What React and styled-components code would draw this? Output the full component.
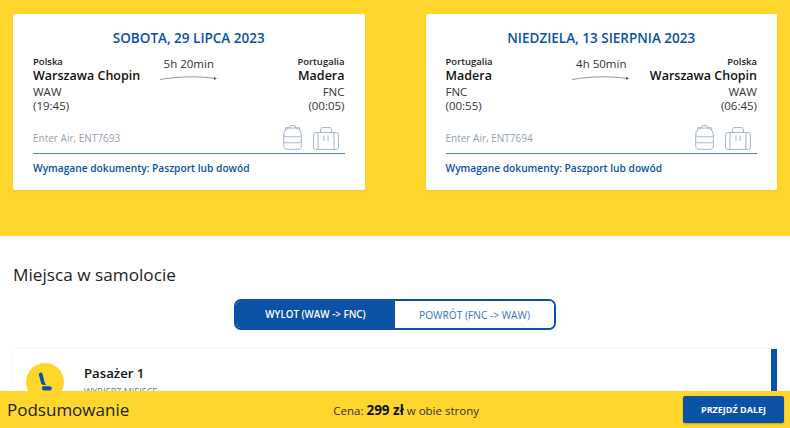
import styled, { createGlobalStyle } from 'styled-components';

const GlobalStyle = createGlobalStyle`
    html, body {
        margin: 0;
        padding: 0;
        background: #fff;
        overflow: hidden;
    }
    * {
        box-sizing: border-box;
    }
    body {
        font-family: "Open Sans", "Noto Sans", sans-serif;
        color: #1a1a1a;
    }
`;

const flights = [
    {
        date: 'SOBOTA, 29 LIPCA 2023',
        duration: '5h 20min',
        carrier: 'Enter Air, ENT7693',
        from: { country: 'Polska', city: 'Warszawa Chopin', code: 'WAW', time: '(19:45)' },
        to: { country: 'Portugalia', city: 'Madera', code: 'FNC', time: '(00:05)' },
    },
    {
        date: 'NIEDZIELA, 13 SIERPNIA 2023',
        duration: '4h 50min',
        carrier: 'Enter Air, ENT7694',
        from: { country: 'Portugalia', city: 'Madera', code: 'FNC', time: '(00:55)' },
        to: { country: 'Polska', city: 'Warszawa Chopin', code: 'WAW', time: '(06:45)' },
    },
];

function Arc() {
    return (
        <svg width="58" height="6" viewBox="0 0 58 6" fill="none">
            <path d="M0 4.500C18 1.500 38 .8 56 3.600" stroke="#7a7f85" strokeWidth=".8" />
            <path d="M54 1.800l3 1.900-3 1z" fill="#55595e" />
        </svg>
    );
}

function Backpack() {
    return (
        <svg width="19" height="25" viewBox="0 0 19 25" fill="none" stroke="#a3b4c6" strokeWidth="1">
            <path d="M6.500 3V1.800C6.500 1 7 .6 7.800.6h3.400c.8 0 1.300.4 1.300 1.200V3" />
            <path d="M.7 9.500c0-3.600 2.400-5.800 5.300-6.500h7c2.900.7 5.300 2.900 5.300 6.500v11.500c0 2-1.500 3.300-3.400 3.300H4.100C2.200 24.300.7 23 .7 21z" />
            <path d="M.7 10.500c.8 1 1.800 1.300 3 1.300h11.600c1.200 0 2.200-.3 3-1.300" />
            <path d="M.7 16.500c.8 1 1.800 1.300 3 1.300h11.600c1.200 0 2.200-.3 3-1.300" />
            <path d="M2.500 5V3.300c0-.6.500-1 1.200-.8L6 3M16.500 5V3.300c0-.6-.5-1-1.200-.8L13 3" />
        </svg>
    );
}

function Suitcase() {
    return (
        <svg width="26" height="23" viewBox="0 0 26 23" fill="none" stroke="#a3b4c6" strokeWidth="1">
            <rect x=".6" y="5.500" width="24.800" height="16.900" rx="2" />
            <path d="M7.500 5.500V2.300C7.500 1.300 8.300.6 9.300.6h7.400c1 0 1.800.7 1.800 1.700v3.200" />
            <path d="M5 5.500v16.900M21 5.500v16.900M11 8.500v5.500M15 8.500v5.500" />
        </svg>
    );
}

function Seat() {
    return (
        <svg width="14" height="20" viewBox="0 0 14 20" fill="#0a52a6">
            <path d="M.8 2.300C1 .5 3.700-.4 4.300 1.300l2.500 9.500c.3 1 1 1.500 2 1.700l-3 .5c-1.300 0-2.300-.7-2.800-2z" />
            <path d="M4.500 14.200h6.700c1.600 0 2.600.8 2.600 2 0 1.400-1 2.300-2.400 2.300H6.500c-1.300 0-2.300-.8-2.600-2.100z" />
        </svg>
    );
}

function Endpoint({ place, right }) {
    return (
        <Place $right={right}>
            <Country>{place.country}</Country>
            <City>{place.city}</City>
            <Code>{place.code}</Code>
            <Code>{place.time}</Code>
        </Place>
    );
}

function FlightCard({ flight }) {
    return (
        <Card>
            <CardDate>{flight.date}</CardDate>
            <Route>
                <Endpoint place={flight.from} />
                <Duration>
                    <span>{flight.duration}</span>
                    <Arc />
                </Duration>
                <Endpoint place={flight.to} right />
            </Route>
            <CarrierRow>
                <Carrier>{flight.carrier}</Carrier>
                <Baggage>
                    <Backpack />
                    <Suitcase />
                </Baggage>
            </CarrierRow>
            <Documents>Wymagane dokumenty: Paszport lub dowód</Documents>
        </Card>
    );
}

export default function App() {
    return (
        <Page>
            <GlobalStyle />
            <FlightBand>
                {flights.map((flight) => <FlightCard flight={flight} key={flight.carrier} />)}
            </FlightBand>
            <SeatSection>
                <SectionTitle>Miejsca w samolocie</SectionTitle>
                <Toggle>
                    <ToggleOption $active>WYLOT (WAW -&gt; FNC)</ToggleOption>
                    <ToggleOption>POWRÓT (FNC -&gt; WAW)</ToggleOption>
                </Toggle>
                <PassengerCard>
                    <SeatBadge><Seat /></SeatBadge>
                    <div>
                        <PassengerName>Pasażer 1</PassengerName>
                        <PassengerHint>WYBIERZ MIEJSCE</PassengerHint>
                    </div>
                </PassengerCard>
            </SeatSection>
            <Footer>
                <FooterTitle>Podsumowanie</FooterTitle>
                <Price>Cena: <strong>299 zł</strong> w obie strony</Price>
                <NextButton>PRZEJDŹ DALEJ</NextButton>
            </Footer>
        </Page>
    );
}

const Page = styled.div`
    width: 790px;
    height: 428px;
    overflow: hidden;
`;

const FlightBand = styled.section`
    display: grid;
    grid-template-columns: 1fr 1fr;
    column-gap: 61px;
    height: 236px;
    padding: 14px 13px 0;
    background: #ffd72c;
`;

const Card = styled.article`
    height: 176px;
    padding: 14px 20px 0;
    background: #fff;
    border-radius: 2px;
    box-shadow: 0 1px 3px rgba(0, 0, 0, .08);
`;

const CardDate = styled.h2`
    margin: 0 0 8px;
    font-size: 13.500px;
    line-height: 20px;
    font-weight: 600;
    text-align: center;
    color: #0a52a6;
`;

const Route = styled.div`
    display: flex;
    justify-content: space-between;
    align-items: flex-start;
`;

const Place = styled.div`
    display: flex;
    flex-direction: column;
    flex: 1 1 0;
    align-items: ${({ $right }) => ($right ? 'flex-end' : 'flex-start')};
    text-align: ${({ $right }) => ($right ? 'right' : 'left')};
`;

const Country = styled.div`
    font-size: 9.500px;
    line-height: 12px;
    font-weight: 600;
    color: #1a1a1a;
`;

const City = styled.div`
    font-size: 12.500px;
    line-height: 16.500px;
    font-weight: 600;
    white-space: nowrap;
    color: #111;
`;

const Code = styled.div`
    font-size: 11.500px;
    line-height: 14px;
    color: #333;
`;

const Duration = styled.div`
    display: flex;
    flex: none;
    flex-direction: column;
    align-items: center;
    gap: 3px;
    font-size: 11.500px;
    line-height: 16px;
    color: #333;
`;

const CarrierRow = styled.div`
    display: flex;
    justify-content: space-between;
    align-items: flex-end;
    height: 41.500px;
    padding: 0 6px 0 0;
    border-bottom: 1px solid #4f86bd;
`;

const Carrier = styled.span`
    margin-bottom: 7px;
    font-size: 10px;
    line-height: 15px;
    color: #94a3b2;
`;

const Baggage = styled.div`
    display: flex;
    align-items: flex-end;
    gap: 11px;
    margin-bottom: 3px;
`;

const Documents = styled.p`
    margin: 7px 0 0;
    font-size: 10.200px;
    line-height: 15px;
    font-weight: 600;
    color: #0a52a6;
`;

const SeatSection = styled.section`
    height: 192px;
    padding: 27px 13px 0;
    background: #fff;
`;

const SectionTitle = styled.h1`
    margin: 0 0 13px;
    font-size: 17.200px;
    line-height: 23px;
    font-weight: 400;
    color: #222;
`;

const Toggle = styled.div`
    display: flex;
    width: 322px;
    height: 31px;
    margin: 0 auto 19px;
    border: 2px solid #0a52a6;
    border-radius: 7px;
    overflow: hidden;
`;

const ToggleOption = styled.div`
    display: flex;
    flex: 1 1 0;
    justify-content: center;
    align-items: center;
    font-size: ${({ $active }) => ($active ? '9.800px' : '10.200px')};
    font-weight: ${({ $active }) => ($active ? 600 : 400)};
    color: ${({ $active }) => ($active ? '#fff' : '#3a73b5')};
    background: ${({ $active }) => ($active ? '#0a52a6' : '#fff')};
`;

const PassengerCard = styled.div`
    display: flex;
    gap: 20px;
    height: 90px;
    padding: 14px 0 0 13px;
    background: #fff;
    border-right: 6px solid #0a52a6;
    box-shadow: 0 0 4px rgba(0, 0, 0, .08);
`;

const SeatBadge = styled.div`
    display: flex;
    justify-content: center;
    align-items: center;
    width: 38px;
    height: 38px;
    border-radius: 50%;
    background: #ffd72c;
`;

const PassengerName = styled.div`
    margin-top: 1px;
    font-size: 13.200px;
    line-height: 18px;
    font-weight: 600;
    color: #111;
`;

const PassengerHint = styled.div`
    margin-top: 4px;
    font-size: 9px;
    line-height: 12px;
    color: #777;
`;

const Footer = styled.footer`
    position: fixed;
    left: 0;
    right: 0;
    bottom: 0;
    display: flex;
    justify-content: space-between;
    align-items: center;
    height: 37px;
    padding: 0 6px 0 7px;
    background: #ffd72c;
`;

const FooterTitle = styled.div`
    font-size: 17px;
    line-height: 23px;
    color: #222;
`;

const Price = styled.div`
    font-size: 11.500px;
    color: #333;

    strong {
        font-size: 13.500px;
        font-weight: 700;
        color: #111;
    }
`;

const NextButton = styled.button`
    width: 101px;
    height: 27px;
    padding: 0;
    border: 0;
    border-radius: 2px;
    background: #0a52a6;
    box-shadow: 0 1px 2px rgba(0, 0, 0, .25);
    font-family: inherit;
    font-size: 9px;
    font-weight: 700;
    color: #fff;
`;
